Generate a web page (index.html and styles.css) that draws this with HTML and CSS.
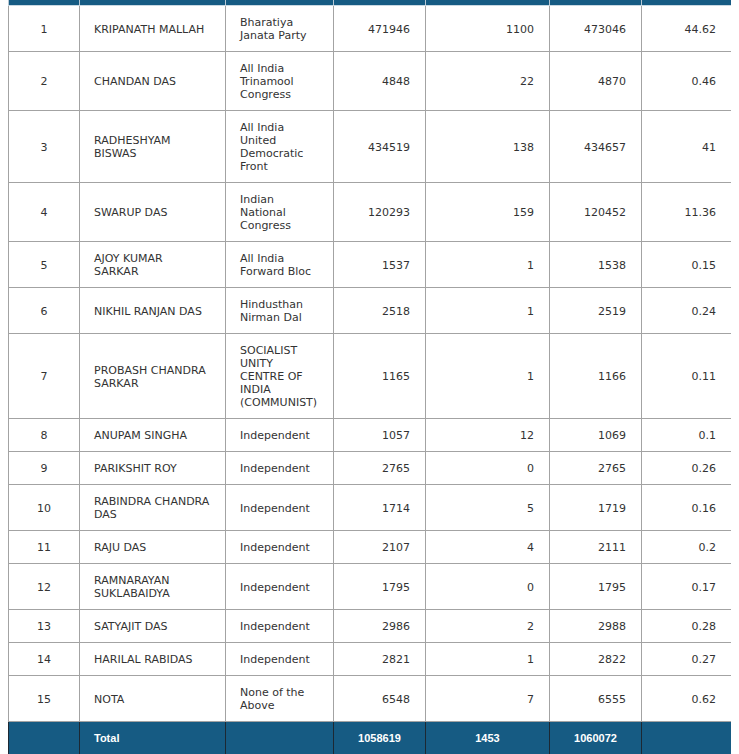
FILE: index.html
```html
<!DOCTYPE html>
<html lang="en">
<head>
<meta charset="utf-8">
<title>Results</title>
<link rel="stylesheet" href="styles.css">
</head>
<body>
<table class="results">
  <colgroup>
    <col class="c-sn">
    <col class="c-name">
    <col class="c-party">
    <col class="c-evm">
    <col class="c-post">
    <col class="c-total">
    <col class="c-pct">
  </colgroup>
  <thead>
    <tr class="head"><th></th><th></th><th></th><th></th><th></th><th></th><th></th></tr>
  </thead>
  <tbody>
    <tr><td class="sn">1</td><td class="txt">KRIPANATH MALLAH</td><td class="txt">Bharatiya Janata Party</td><td class="num">471946</td><td class="num">1100</td><td class="num">473046</td><td class="num">44.62</td></tr>
    <tr><td class="sn">2</td><td class="txt">CHANDAN DAS</td><td class="txt">All India Trinamool Congress</td><td class="num">4848</td><td class="num">22</td><td class="num">4870</td><td class="num">0.46</td></tr>
    <tr><td class="sn">3</td><td class="txt">RADHESHYAM BISWAS</td><td class="txt">All India United Democratic Front</td><td class="num">434519</td><td class="num">138</td><td class="num">434657</td><td class="num">41</td></tr>
    <tr><td class="sn">4</td><td class="txt">SWARUP DAS</td><td class="txt">Indian National Congress</td><td class="num">120293</td><td class="num">159</td><td class="num">120452</td><td class="num">11.36</td></tr>
    <tr><td class="sn">5</td><td class="txt">AJOY KUMAR SARKAR</td><td class="txt">All India Forward Bloc</td><td class="num">1537</td><td class="num">1</td><td class="num">1538</td><td class="num">0.15</td></tr>
    <tr><td class="sn">6</td><td class="txt">NIKHIL RANJAN DAS</td><td class="txt">Hindusthan Nirman Dal</td><td class="num">2518</td><td class="num">1</td><td class="num">2519</td><td class="num">0.24</td></tr>
    <tr><td class="sn">7</td><td class="txt">PROBASH CHANDRA SARKAR</td><td class="txt">SOCIALIST UNITY CENTRE OF INDIA (COMMUNIST)</td><td class="num">1165</td><td class="num">1</td><td class="num">1166</td><td class="num">0.11</td></tr>
    <tr><td class="sn">8</td><td class="txt">ANUPAM SINGHA</td><td class="txt">Independent</td><td class="num">1057</td><td class="num">12</td><td class="num">1069</td><td class="num">0.1</td></tr>
    <tr><td class="sn">9</td><td class="txt">PARIKSHIT ROY</td><td class="txt">Independent</td><td class="num">2765</td><td class="num">0</td><td class="num">2765</td><td class="num">0.26</td></tr>
    <tr><td class="sn">10</td><td class="txt">RABINDRA&nbsp;CHANDRA DAS</td><td class="txt">Independent</td><td class="num">1714</td><td class="num">5</td><td class="num">1719</td><td class="num">0.16</td></tr>
    <tr><td class="sn">11</td><td class="txt">RAJU DAS</td><td class="txt">Independent</td><td class="num">2107</td><td class="num">4</td><td class="num">2111</td><td class="num">0.2</td></tr>
    <tr><td class="sn">12</td><td class="txt">RAMNARAYAN SUKLABAIDYA</td><td class="txt">Independent</td><td class="num">1795</td><td class="num">0</td><td class="num">1795</td><td class="num">0.17</td></tr>
    <tr><td class="sn">13</td><td class="txt">SATYAJIT DAS</td><td class="txt">Independent</td><td class="num">2986</td><td class="num">2</td><td class="num">2988</td><td class="num">0.28</td></tr>
    <tr><td class="sn">14</td><td class="txt">HARILAL RABIDAS</td><td class="txt">Independent</td><td class="num">2821</td><td class="num">1</td><td class="num">2822</td><td class="num">0.27</td></tr>
    <tr><td class="sn">15</td><td class="txt">NOTA</td><td class="txt">None of the Above</td><td class="num">6548</td><td class="num">7</td><td class="num">6555</td><td class="num">0.62</td></tr>
  </tbody>
  <tfoot>
    <tr class="total"><td></td><td class="label">Total</td><td></td><td>1058619</td><td>1453</td><td>1060072</td><td></td></tr>
  </tfoot>
</table>
</body>
</html>
```

FILE: styles.css
```css
html, body {
  background: #ffffff;
}
body {
  margin: 0 8px;
  font-family: "DejaVu Sans", Verdana, sans-serif;
  font-size: 11px;
  line-height: 13px;
  color: #333333;
}
.results {
  border-collapse: collapse;
  table-layout: fixed;
  width: 723px;
}
.c-sn { width: 71px; }
.c-name { width: 146px; }
.c-party { width: 108px; }
.c-evm { width: 92px; }
.c-post { width: 124px; }
.c-total { width: 92px; }
.c-pct { width: 90px; }

.head th {
  height: 5px;
  padding: 0;
  background: #165b83;
  border-left: 1px solid #b8c8d4;
  border-right: 1px solid #b8c8d4;
  border-bottom: 1px solid #c9d8e2;
}
.results td {
  border: 1px solid #a3a3a3;
  padding: 10px 15px 9px;
  vertical-align: middle;
  text-align: left;
}
.results td.txt {
  padding-left: 14px;
}
.results td.sn {
  text-align: center;
}
.results td.num {
  text-align: right;
}
.total td {
  background: #165b83;
  border: 1px solid #1c2833;
  color: #ffffff;
  font-family: "Liberation Sans", Arial, sans-serif;
  font-weight: bold;
  font-size: 11px;
  text-align: center;
}
.results .total td.label {
  text-align: left;
  padding-left: 14px;
}
```
